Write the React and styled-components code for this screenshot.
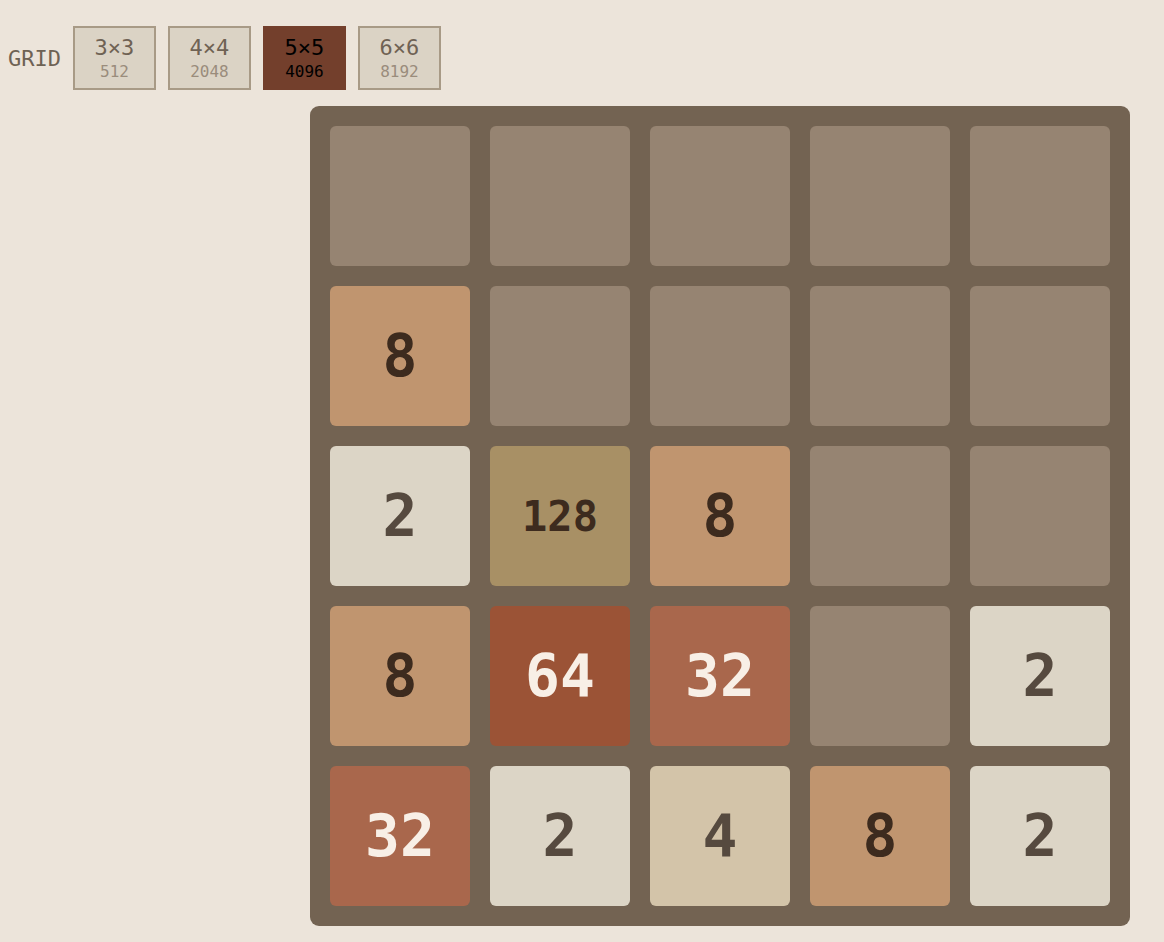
import styled, { createGlobalStyle } from "styled-components";

const GlobalStyle = createGlobalStyle`
  body {
    margin: 0;
    background: #ece4da;
    font-family: "DejaVu Sans Mono", "Liberation Mono", monospace;
  }
`

const sizes = [
  { label: "3×3", target: 512 },
  { label: "4×4", target: 2048 },
  { label: "5×5", target: 4096, active: true },
  { label: "6×6", target: 8192 },
]

const board = [
  [0, 0, 0, 0, 0],
  [8, 0, 0, 0, 0],
  [2, 128, 8, 0, 0],
  [8, 64, 32, 0, 2],
  [32, 2, 4, 8, 2],
]

const tileColors = {
  0: { bg: "#968472", fg: "transparent" },
  2: { bg: "#dcd5c6", fg: "#564a3f" },
  4: { bg: "#d3c4a9", fg: "#564a3f" },
  8: { bg: "#c0956f", fg: "#3d2b1e" },
  32: { bg: "#a9674c", fg: "#f8efe6" },
  64: { bg: "#9b5336", fg: "#f8efe6" },
  128: { bg: "#a89065", fg: "#3d2b1e" },
}

function App() {
  return (
    <Page>
      <GlobalStyle />
      <Toolbar>
        <Label>GRID</Label>
        {sizes.map((s) => (
          <SizeButton key={s.label} $active={s.active}>
            <SizeName>{s.label}</SizeName>
            <SizeTarget>{s.target}</SizeTarget>
          </SizeButton>
        ))}
      </Toolbar>

      <Board>
        {board.flat().map((v, i) => (
          <Tile key={i} $bg={tileColors[v].bg} $fg={tileColors[v].fg} $small={v >= 100}>
            {v || ""}
          </Tile>
        ))}
      </Board>
    </Page>
  )
}

const Page = styled.div`
  padding: 26px 8px;
`

const Toolbar = styled.div`
  display: flex;
  align-items: center;
  gap: 12px;
`

const Label = styled.span`
  font-size: 22px;
  color: #6f6254;
`

const SizeButton = styled.div`
  box-sizing: border-box;
  width: 83px;
  height: 64px;
  display: flex;
  flex-direction: column;
  align-items: center;
  justify-content: center;
  gap: 1px;
  background: ${(p) => (p.$active ? "#733f2c" : "#dbd3c5")};
  border: 2px solid ${(p) => (p.$active ? "#733f2c" : "#a89a86")};
  color: ${(p) => (p.$active ? "#000" : "#6f6254")};

  span:last-child {
    color: ${(p) => (p.$active ? "#000" : "#9a8c7c")};
  }
`

const SizeName = styled.span`
  font-size: 22px;
  line-height: 26px;
`

const SizeTarget = styled.span`
  font-size: 16px;
  line-height: 20px;
`

const Board = styled.div`
  margin: 16px 0 0 302px;
  width: 820px;
  box-sizing: border-box;
  padding: 20px;
  display: grid;
  grid-template-columns: repeat(5, 140px);
  grid-auto-rows: 140px;
  gap: 20px;
  background: #736352;
  border-radius: 9px;
`

const Tile = styled.div`
  display: flex;
  align-items: center;
  justify-content: center;
  border-radius: 6px;
  background: ${(p) => p.$bg};
  color: ${(p) => p.$fg};
  font-weight: bold;
  font-size: ${(p) => (p.$small ? "42px" : "58px")};
`

export default App
